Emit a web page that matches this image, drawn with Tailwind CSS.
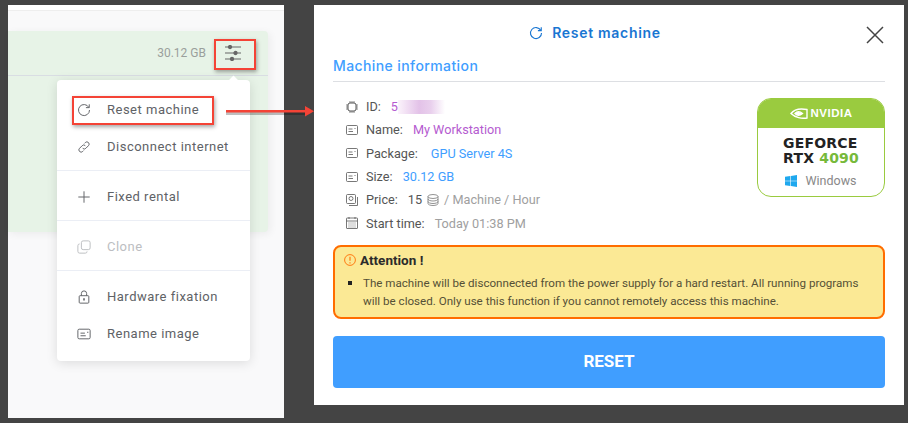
<!DOCTYPE html>
<html lang="en">
<head>
  <meta charset="UTF-8" />
  <title>Reset machine</title>
  <script src="https://cdn.jsdelivr.net/npm/@tailwindcss/browser@4"></script>
</head>
<body class="bg-[#444444] w-[908px] h-[423px] overflow-hidden font-['Roboto',sans-serif]">
  <div class="relative flex items-start pl-2 pt-[5px]">

    <!-- Left panel -->
    <div class="relative w-[276px] h-[413px] bg-[#f9f9fa] shrink-0">
      <div class="h-[6px] bg-white border-b border-[#eeeeee]"></div>

      <!-- Green card -->
      <div class="mt-5 w-[260px] h-[201px] bg-[#e7f3e7] rounded-r shadow-[2px_2px_8px_rgba(0,0,0,0.06)]">
        <div class="h-[45px] border-b border-[#d9dde3] flex items-center justify-end pr-[27px] gap-[19px]">
          <span class="text-[12px] text-[#9a9f9c]">30.12 GB</span>
          <svg class="w-4 h-4 text-[#666]" viewBox="0 0 16 16" fill="none" stroke="currentColor" stroke-width="1.1">
            <path d="M0 2h16M0 8h16M0 14h16" />
            <circle cx="5" cy="2" r="1.6" fill="currentColor" />
            <circle cx="10.500" cy="8" r="1.6" fill="currentColor" />
            <circle cx="7" cy="14" r="1.6" fill="currentColor" />
          </svg>
        </div>
      </div>

      <!-- Dropdown -->
      <div class="absolute left-[49px] top-[75px] w-[193px] h-[281px] bg-white rounded-sm shadow-[0_2px_12px_rgba(0,0,0,0.12)] text-[13px] tracking-[0.5px] text-[#606266]">
        <div class="absolute -top-[3px] left-[173px] w-[7px] h-[7px] bg-white rotate-45"></div>
        <div class="pt-[11px] pb-[5px] border-b border-[#ebeef5]">
          <div class="h-[37px] flex items-center pl-[20px] gap-[16px]">
            <svg class="w-[14px] h-[14px] shrink-0" viewBox="0 0 16 16" fill="none" stroke="currentColor" stroke-width="1.1"><path d="M13.500 5A6.300 6.300 0 1 0 14.300 8" /><path d="M14 1.500V5.300H10.200" /></svg>
            <span>Reset machine</span>
          </div>
          <div class="h-[37px] flex items-center pl-[20px] gap-[16px]">
            <svg class="w-[14px] h-[14px] shrink-0" viewBox="0 0 16 16" fill="none" stroke="currentColor" stroke-width="1.1"><path d="M6.500 9.500a2.500 2.500 0 0 0 3.600 0l3-3a2.500 2.500 0 0 0-3.600-3.600l-1 1" /><path d="M9.500 6.500a2.500 2.500 0 0 0-3.600 0l-3 3a2.500 2.500 0 0 0 3.600 3.600l1-1" /></svg>
            <span>Disconnect internet</span>
          </div>
        </div>
        <div class="pt-[7px] pb-[5px] border-b border-[#ebeef5]">
          <div class="h-[37px] flex items-center pl-[20px] gap-[16px]">
            <svg class="w-[14px] h-[14px] shrink-0" viewBox="0 0 16 16" fill="none" stroke="currentColor" stroke-width="1.1"><path d="M8 1.500v13M1.500 8h13" /></svg>
            <span>Fixed rental</span>
          </div>
        </div>
        <div class="pt-[7px] pb-[5px] border-b border-[#ebeef5] text-[#bcbec2]">
          <div class="h-[37px] flex items-center pl-[20px] gap-[16px]">
            <svg class="w-[14px] h-[14px] shrink-0" viewBox="0 0 16 16" fill="none" stroke="currentColor" stroke-width="1.1"><rect x="5" y="1" width="10" height="10" rx="2" /><path d="M3 4.500A2 2 0 0 0 1 6.500V13a2 2 0 0 0 2 2h6.500a2 2 0 0 0 2-2" /></svg>
            <span>Clone</span>
          </div>
        </div>
        <div class="pt-[7px]">
          <div class="h-[37px] flex items-center pl-[20px] gap-[16px]">
            <svg class="w-[14px] h-[14px] shrink-0" viewBox="0 0 16 16" fill="none" stroke="currentColor" stroke-width="1.1"><rect x="2.500" y="6.500" width="11" height="8.500" rx="1" /><path d="M5 6.500V4a3 3 0 0 1 6 0v2.500" /><path d="M8 9.500v2.500" stroke-width="1.800" /></svg>
            <span>Hardware fixation</span>
          </div>
          <div class="h-[37px] flex items-center pl-[20px] gap-[16px]">
            <svg class="w-[14px] h-[14px] shrink-0" viewBox="0 0 16 16" fill="none" stroke="currentColor" stroke-width="1.1"><rect x="1" y="2.500" width="14" height="11" rx="1.500" /><path d="M4 7h5M4 10h6M11.500 6h1.500" /></svg>
            <span>Rename image</span>
          </div>
        </div>
      </div>
    </div>

    <!-- Modal -->
    <div class="ml-[30px] w-[590px] h-[400px] shrink-0 bg-white px-[19px] relative">
      <div class="h-[55px] flex items-center justify-center gap-[9px] pr-[28px] text-[#1976d2] font-['Inter',sans-serif] font-semibold text-[14px] tracking-[0.7px]">
        <svg class="w-[14px] h-[14px]" viewBox="0 0 16 16" fill="none" stroke="currentColor" stroke-width="1.300"><path d="M13.500 5A6.300 6.300 0 1 0 14.300 8" /><path d="M14 1.500V5.300H10.200" /></svg>
        <span>Reset machine</span>
      </div>
      <svg class="absolute right-[19px] top-[20px] w-[20px] h-[20px] text-[#444]" viewBox="0 0 20 20" fill="none" stroke="currentColor" stroke-width="1.500"><path d="M2 2l16 16M18 2L2 18" /></svg>

      <div class="h-[22px] border-b border-[#dddfe3] text-[14px] leading-[12px] font-medium tracking-[0.4px] text-[#409eff] font-['Inter',sans-serif]">Machine information</div>

      <div class="flex justify-between mt-[5px]">
        <div class="pl-[13px] pt-[8px] text-[12.700px] text-[#555] flex flex-col">
          <div class="h-[23.300px] flex items-center">
            <svg class="w-3 h-3 shrink-0 mr-2" viewBox="0 0 12 12" fill="none" stroke="currentColor"><rect x="2" y="2" width="8" height="8" rx="2" /><path d="M4 0v2M6 0v2M8 0v2M4 10v2M6 10v2M8 10v2M0 4h2M0 6h2M0 8h2M10 4h2M10 6h2M10 8h2" stroke-width="0.700" /></svg>
            <span>ID:</span>
            <span class="ml-[10px] text-[#b55bd0]">5</span>
            <span class="w-[47px] h-[14px] bg-[linear-gradient(90deg,#fbf3fb,#e3c2e8_45%,#e9d0ed_70%,#ffffff)]"></span>
          </div>
          <div class="h-[23.300px] flex items-center">
            <svg class="w-3 h-3 shrink-0 mr-2" viewBox="0 0 12 12" fill="none" stroke="currentColor" stroke-width="0.800"><rect x="0.500" y="1.500" width="11" height="9" rx="1" /><path d="M2.500 5h4M2.500 7.500h4.500M8.500 4.500h1" /></svg>
            <span>Name:</span>
            <span class="ml-[10px] text-[#b55bd0]">My Workstation</span>
          </div>
          <div class="h-[23.300px] flex items-center">
            <svg class="w-3 h-3 shrink-0 mr-2" viewBox="0 0 12 12" fill="none" stroke="currentColor" stroke-width="0.800"><rect x="0.500" y="1.500" width="11" height="9" rx="1" /><path d="M2.500 5h4M2.500 7.500h4.500M8.500 4.500h1" /></svg>
            <span>Package:</span>
            <span class="ml-[13px] text-[#409eff]">GPU Server 4S</span>
          </div>
          <div class="h-[23.300px] flex items-center">
            <svg class="w-3 h-3 shrink-0 mr-2" viewBox="0 0 12 12" fill="none" stroke="currentColor" stroke-width="0.800"><rect x="0.500" y="1.500" width="11" height="9" rx="1" /><path d="M2.500 5h4M2.500 7.500h4.500M8.500 4.500h1" /></svg>
            <span>Size:</span>
            <span class="ml-[10px] text-[#409eff]">30.12 GB</span>
          </div>
          <div class="h-[23.300px] flex items-center">
            <svg class="w-3 h-3 shrink-0 mr-2" viewBox="0 0 12 12" fill="none" stroke="currentColor" stroke-width="0.800"><rect x="0.500" y="0.500" width="9" height="9" rx="1" /><circle cx="5" cy="4.500" r="2" /><path d="M11.500 3v8.500H3" /></svg>
            <span>Price:</span>
            <span class="ml-[10px]">15</span>
            <svg class="w-3 h-3 mx-[5px] text-[#777]" viewBox="0 0 12 12" fill="none" stroke="currentColor" stroke-width="0.800"><ellipse cx="6" cy="2.500" rx="5" ry="2" /><path d="M1 2.500v7c0 1.100 2.200 2 5 2s5-.9 5-2v-7M1 5c0 1.100 2.200 2 5 2s5-.9 5-2M1 7.500c0 1.100 2.200 2 5 2s5-.9 5-2" /></svg>
            <span class="text-[#a0a0a0]">/ Machine / Hour</span>
          </div>
          <div class="h-[23.300px] flex items-center">
            <svg class="w-3 h-3 shrink-0 mr-2" viewBox="0 0 12 12" fill="none" stroke="currentColor" stroke-width="0.800"><rect x="0.500" y="1" width="11" height="10.500" rx="0.500" /><path d="M0.500 4h11M3 0v2M9 0v2" /><path d="M2.500 6h7M2.500 8h7M2.500 10h7" stroke-dasharray="1 1" /></svg>
            <span>Start time:</span>
            <span class="ml-[10px] text-[#a0a0a0]">Today 01:38 PM</span>
          </div>
        </div>

        <!-- GPU badge -->
        <div class="w-[128px] h-[99px] mt-[11px] border border-[#9acb3f] rounded-[14px] overflow-hidden flex flex-col items-center shrink-0">
          <div class="w-full h-[29px] bg-[#9acb3f] flex items-center justify-center gap-[3px] text-white font-['Liberation_Sans',sans-serif] font-bold text-[11.500px] tracking-[0.5px]">
            <svg class="w-[18px] h-[11px]" viewBox="0 0 18 11" fill="none" stroke="white" stroke-width="1.400"><path d="M1 5.500C4 1.500 9 0 17 1.500V10C12 11 5 9.500 1 5.500Z" /><path d="M5 5.500C7 3.500 10 3.500 12.500 5.500C10 7.500 7 7.500 5 5.500Z" fill="white" /></svg>
            <span>NVIDIA</span>
          </div>
          <div class="mt-[8px] text-[14px] leading-[15px] font-bold font-['DejaVu_Sans',sans-serif] text-[#222] tracking-[0.2px]">
            <div>GEFORCE</div>
            <div>RTX <span class="text-[#76b93a]">4090</span></div>
          </div>
          <div class="mt-[6px] flex items-center gap-2 text-[12.500px] text-[#888]">
            <svg class="w-3 h-3" viewBox="0 0 12 12" fill="#1fa8ee"><path d="M0 1.700 5.400 1v4.700H0zM6 .9 12 0v5.700H6zM0 6.300h5.400V11L0 10.300zM6 6.300h6V12l-6-.9z" /></svg>
            <span>Windows</span>
          </div>
        </div>
      </div>

      <!-- Attention -->
      <div class="mt-[10px] h-[74px] border-2 border-[#ff6d00] rounded-[8px] bg-[#fbe995] pl-[9px] pr-2 pt-[5px]">
        <div class="flex items-center gap-[4px] h-[17px] font-bold text-[13.500px] text-[#2b2b2b]">
          <svg class="w-3 h-3 text-[#ff7a12]" viewBox="0 0 12 12" fill="none" stroke="currentColor"><circle cx="6" cy="6" r="5.400" /><path d="M6 2.800v4M6 8.200v1.200" stroke-width="1.200" /></svg>
          <span>Attention !</span>
        </div>
        <div class="flex mt-[5px] text-[11.600px] leading-[18px] text-[#555036]">
          <span class="w-[4px] h-[4px] bg-[#222] mt-[7px] ml-[4px] mr-[11px] shrink-0"></span>
          <p class="w-[505px]">The machine will be disconnected from the power supply for a hard restart. All running programs will be closed. Only use this function if you cannot remotely access this machine.</p>
        </div>
      </div>

      <button class="mt-[17px] w-full h-[52px] rounded bg-[#409eff] text-white font-bold text-[17px]">RESET</button>
    </div>

    <!-- Annotations -->
    <div class="absolute left-[214px] top-[39px] w-[42px] h-[31px] border-2 border-[#f44336] shadow-[1px_2px_4px_rgba(0,0,0,0.35)]"></div>
    <div class="absolute left-[72px] top-[96px] w-[142px] h-[29px] border-2 border-[#f44336] shadow-[1px_2px_4px_rgba(0,0,0,0.35)]"></div>
    <svg class="absolute left-[226px] top-[104px] w-[90px] h-[14px]" viewBox="0 0 90 14">
      <rect x="0" y="8" width="80" height="3" fill="#000" opacity="0.25" />
      <rect x="0" y="6" width="80" height="2.500" fill="#f44336" />
      <path d="M79 2 88 7.200 79 12.500Z" fill="#f44336" />
    </svg>
  </div>
</body>
</html>
